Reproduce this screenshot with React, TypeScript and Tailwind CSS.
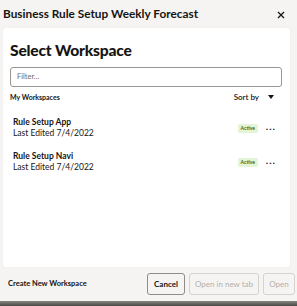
import React from 'react';

const workspaces = [
  { name: 'Rule Setup App', edited: '7/4/2022' },
  { name: 'Rule Setup Navi', edited: '7/4/2022' },
];

const App = () => {
  return (
    <div
      className="w-[297px] h-[306px] bg-[#f5f4f2] flex flex-col overflow-hidden text-[#161513]"
      style={{ fontFamily: 'Lato, "Noto Sans", sans-serif' }}
    >
      {/* header */}
      <div className="flex items-center justify-between pl-[3px] pr-[12px] h-[28px]">
        <div className="text-[11.8px] font-bold">Business Rule Setup Weekly Forecast</div>
        <svg width="8" height="8" viewBox="0 0 8 8" className="mt-[1px]">
          <path d="M1 1 L7 7 M7 1 L1 7" stroke="#161513" strokeWidth="1.3" />
        </svg>
      </div>

      {/* card */}
      <div className="mx-[3px] w-[287px] h-[239px] bg-white rounded-[2px] shadow-[0_0_1px_rgba(0,0,0,0.15)] px-[7px] pt-[13px]">
        <div className="text-[15.6px] font-black leading-[18px] tracking-[-0.2px]">Select Workspace</div>
        <div className="mt-[8px] h-[20px] w-[272px] border border-[#9a9692] rounded-[3px] flex items-center px-[6px] text-[7.5px] text-[#6f6b66]">
          Filter...
        </div>
        <div className="mt-[5px] h-[10px] flex items-center justify-between pr-[9px]">
          <div className="text-[7px] font-bold">My Workspaces</div>
          <div className="flex items-center gap-[9px] text-[8px] font-semibold">
            <span>Sort by</span>
            <svg width="6" height="4" viewBox="0 0 6 4">
              <path d="M0 0 H6 L3 4 Z" fill="#161513" />
            </svg>
          </div>
        </div>

        <div className="mt-[15px] flex flex-col gap-[12px]">
          {workspaces.map((w) => (
            <div key={w.name} className="flex items-center justify-between pl-[3px] pr-[7px]">
              <div className="leading-[11px]">
                <div className="text-[8.5px] font-bold">{w.name}</div>
                <div className="text-[8.5px]">Last Edited {w.edited}</div>
              </div>
              <div className="flex items-center gap-[8px]">
                <span className="bg-[#e3f4d7] text-[#356b1c] text-[5px] font-bold rounded-[2px] px-[3px] leading-[9px]">
                  Active
                </span>
                <span className="text-[10px] font-bold tracking-[1px] leading-none -mt-[4px]">...</span>
              </div>
            </div>
          ))}
        </div>
      </div>

      {/* footer */}
      <div className="flex items-center justify-between pl-[8px] pr-[2px] h-[34px]">
        <div className="text-[7.5px] font-bold">Create New Workspace</div>
        <div className="flex gap-[4px]">
          <button className="h-[22px] w-[38px] border border-[#8f8b86] rounded-[3px] bg-[#f5f4f2] text-[8px] font-bold">
            Cancel
          </button>
          <button className="h-[22px] w-[70px] border border-[#d6d3cf] rounded-[3px] bg-[#f5f4f2] text-[8px] text-[#b3afaa]">
            Open in new tab
          </button>
          <button className="h-[22px] w-[32px] border border-[#d6d3cf] rounded-[3px] bg-[#f5f4f2] text-[8px] text-[#b3afaa]">
            Open
          </button>
        </div>
      </div>
      <div className="flex-1 bg-gradient-to-b from-[#8a8783] to-[#4a4845]" />
    </div>
  );
};

export default App;
